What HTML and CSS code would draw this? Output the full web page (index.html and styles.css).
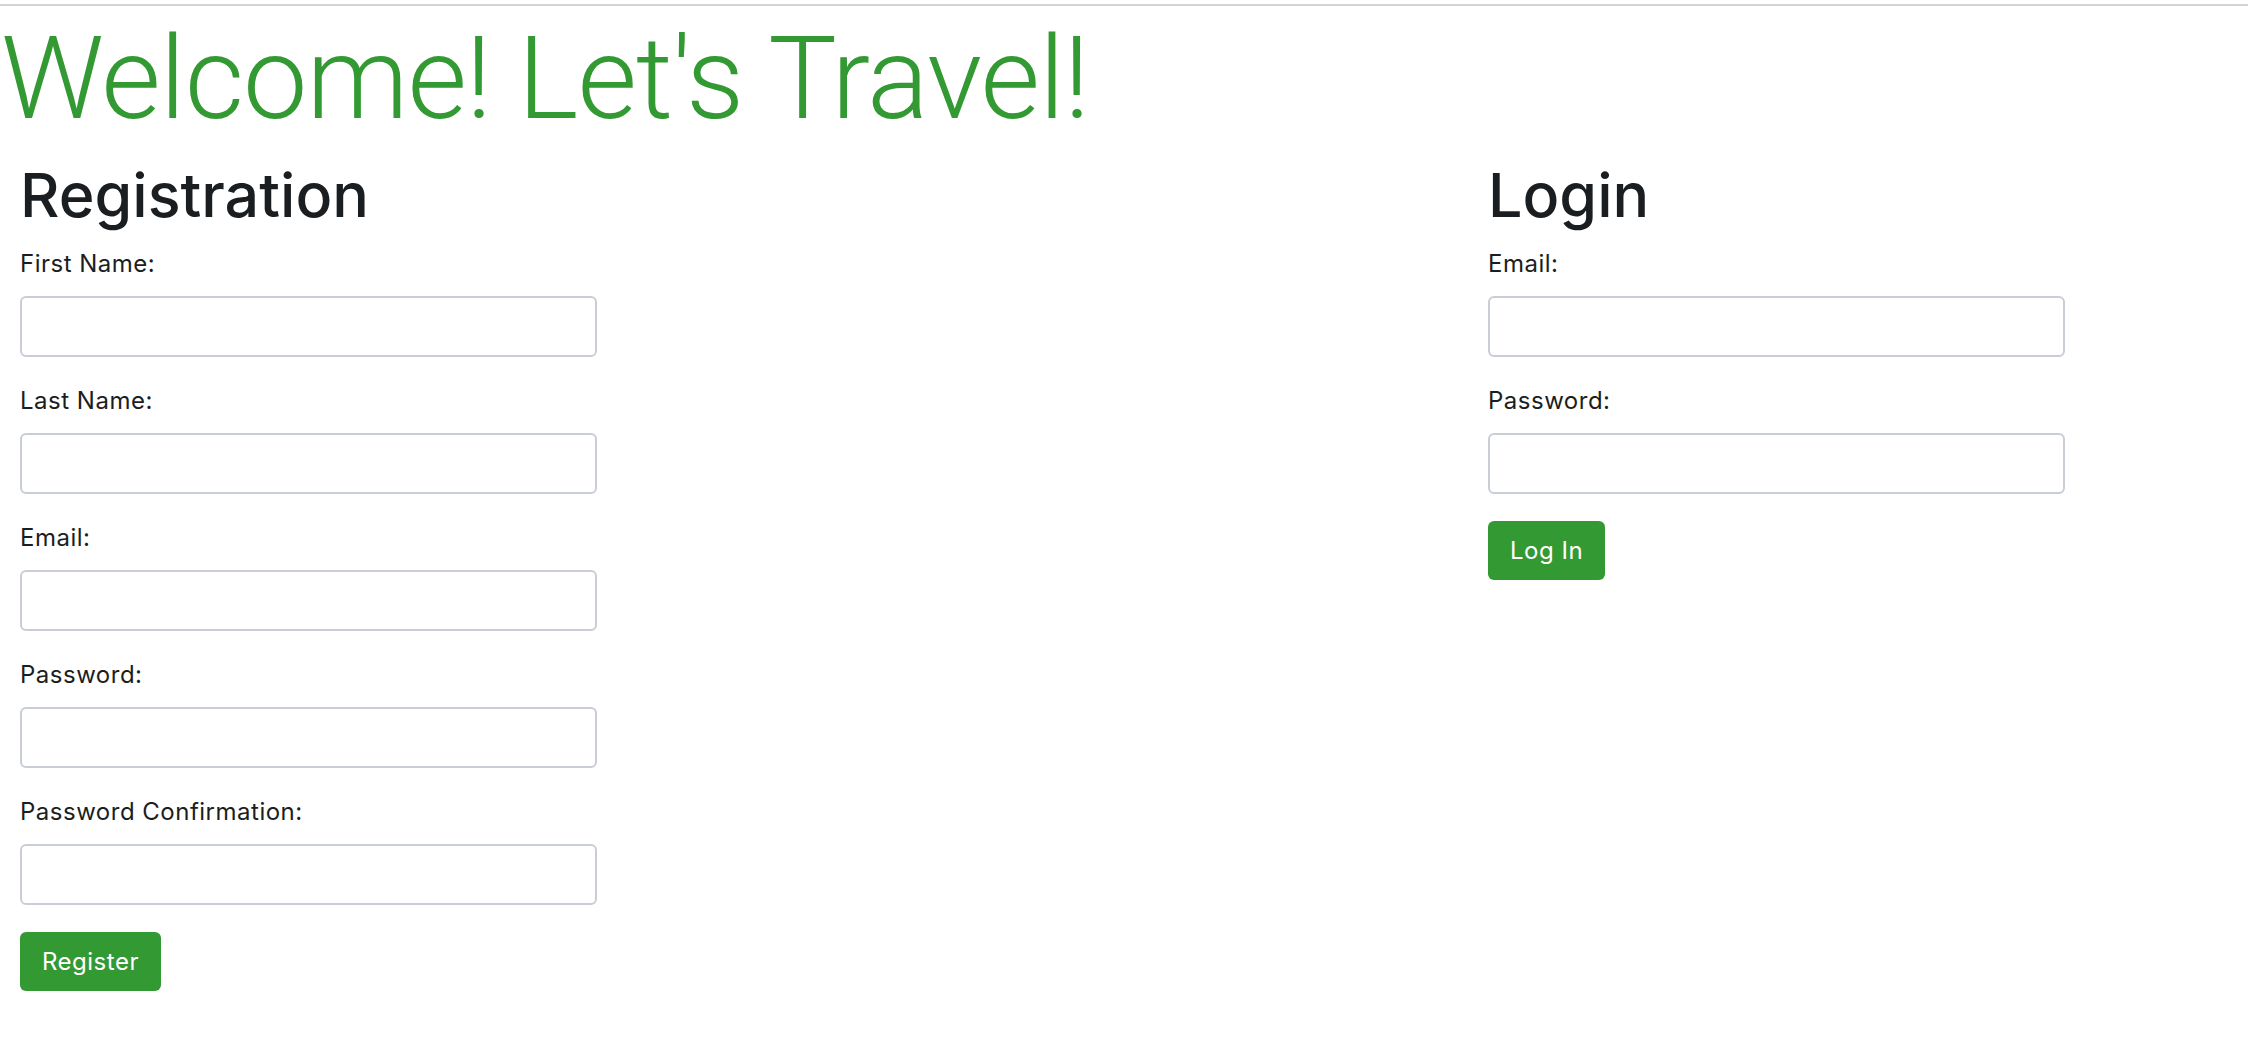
FILE: index.html
```html
<!DOCTYPE html>
<html lang="en">
<head>
<meta charset="utf-8">
<title>Welcome! Let's Travel!</title>
<link rel="stylesheet" href="styles.css">
</head>
<body>
<div class="topline"></div>
<h1 class="title">Welcome! Let's Travel!</h1>
<div class="row">
  <form class="col">
    <h2 class="heading">Registration</h2>
    <div class="group">
      <label class="label">First Name:</label>
      <input class="input" type="text">
    </div>
    <div class="group">
      <label class="label">Last Name:</label>
      <input class="input" type="text">
    </div>
    <div class="group">
      <label class="label">Email:</label>
      <input class="input" type="text">
    </div>
    <div class="group">
      <label class="label">Password:</label>
      <input class="input" type="password">
    </div>
    <div class="group">
      <label class="label">Password Confirmation:</label>
      <input class="input" type="password">
    </div>
    <button class="btn" type="button">Register</button>
  </form>
  <form class="col">
    <h2 class="heading">Login</h2>
    <div class="group">
      <label class="label">Email:</label>
      <input class="input" type="text">
    </div>
    <div class="group">
      <label class="label">Password:</label>
      <input class="input" type="password">
    </div>
    <button class="btn" type="button">Log In</button>
  </form>
</div>
</body>
</html>
```
FILE: styles.css
```css
html, body {
  margin: 0;
  padding: 0;
  background: #ffffff;
}
body {
  font-family: Inter, "Noto Sans", sans-serif;
  color: #1b1e21;
}
.topline {
  height: 2px;
  margin-top: 4px;
  background: #d4d4d4;
}
.title {
  margin: 4px 0 10px 0;
  padding-left: 1px;
  font-family: Roboto, "Liberation Sans", sans-serif;
  font-weight: 300;
  font-size: 115px;
  line-height: 138px;
  letter-spacing: -1px;
  color: #339933;
  white-space: nowrap;
}
.row {
  display: grid;
  grid-template-columns: 1468px 577px;
  padding-left: 20px;
}
.col {
  display: flex;
  flex-direction: column;
  align-items: flex-start;
  margin: 0;
}
.heading {
  margin: 0 0 15px 0;
  font-size: 61px;
  font-weight: 500;
  line-height: 74px;
  color: #1b1e21;
}
.group {
  width: 577px;
  margin-bottom: 27px;
}
.label {
  display: block;
  font-size: 24px;
  line-height: 34px;
  letter-spacing: 0.5px;
  margin-bottom: 15px;
}
.input {
  display: block;
  box-sizing: border-box;
  width: 577px;
  height: 61px;
  margin: 0;
  border: 2px solid #c9ced6;
  border-radius: 6px;
  background: #fff;
  font: inherit;
}
.btn {
  height: 59px;
  padding: 0 22px;
  border: none;
  border-radius: 6px;
  background: #339933;
  color: #ffffff;
  font-family: Inter, "Noto Sans", sans-serif;
  font-size: 24px;
  letter-spacing: 0.5px;
  line-height: 59px;
}
```
